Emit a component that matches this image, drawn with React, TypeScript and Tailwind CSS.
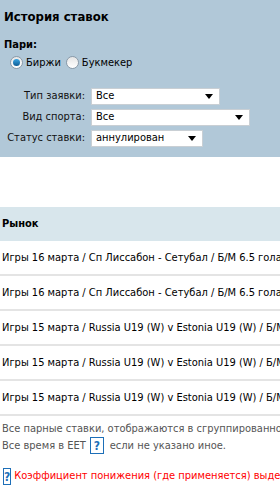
import React from 'react';

const FONT = { fontFamily: '"DejaVu Sans Condensed", "DejaVu Sans", sans-serif' };

const Radio: React.FC<{ checked?: boolean; label: string }> = ({ checked, label }) => (
    <label className="flex items-center gap-[3px]">
        <span className="w-[13px] h-[13px] rounded-full border border-[#8a9aa8] bg-gradient-to-b from-[#e6e6e6] to-[#ffffff] flex items-center justify-center">
            {checked && <span className="w-[7px] h-[7px] rounded-full bg-gradient-to-b from-[#3aa6e4] to-[#0d5c94]" />}
        </span>
        <span>{label}</span>
    </label>
);

const Select: React.FC<{ value: string; width: string }> = ({ value, width }) => (
    <div className={`${width} h-[17px] bg-white border border-[#c9cfd4] flex items-center justify-between pl-[4px] pr-[6px]`}>
        <span className="text-black">{value}</span>
        <svg width="8" height="5" viewBox="0 0 8 5"><path d="M0 0h8L4 5z" fill="#000" /></svg>
    </div>
);

const Help: React.FC = () => (
    <span className="inline-flex w-[14px] h-[17px] border border-[#1d6fb8] items-center justify-center text-[#1d6fb8] text-[12px] font-bold align-middle">?</span>
);

const rows = [
    'Игры 16 марта / Сп Лиссабон - Сетубал / Б/М 6.5 гола',
    'Игры 16 марта / Сп Лиссабон - Сетубал / Б/М 6.5 гола',
    'Игры 15 марта / Russia U19 (W) v Estonia U19 (W) / Б/М',
    'Игры 15 марта / Russia U19 (W) v Estonia U19 (W) / Б/М',
    'Игры 15 марта / Russia U19 (W) v Estonia U19 (W) / Б/М',
];

const App: React.FC = () => (
    <div className="w-[280px] h-[504px] overflow-hidden bg-white text-[11px] text-black whitespace-nowrap" style={FONT}>
        <div className="bg-[#b1c8d8] h-[157px] px-[4px] pt-[8px]">
            <h1 className="text-[13px] font-bold leading-[18px]">История ставок</h1>
            <div className="mt-[12px] font-bold leading-[14px]">Пари:</div>
            <div className="flex gap-[5px] pl-[6px] mt-[3px] leading-[15px]">
                <Radio checked label="Биржи" />
                <Radio label="Букмекер" />
            </div>
            <div className="mt-[18px] flex flex-col gap-[4px]">
                {[
                    ['Тип заявки:', 'Все', 'w-[129px]'],
                    ['Вид спорта:', 'Все', 'w-[159px]'],
                    ['Статус ставки:', 'аннулирован', 'w-[112px]'],
                ].map(([l, v, w]) => (
                    <div key={l} className="flex items-center">
                        <span className="w-[81px] text-right text-[#111]">{l}</span>
                        <span className="ml-[6px]"><Select value={v} width={w} /></span>
                    </div>
                ))}
            </div>
        </div>
        <div className="h-[50px]" />
        <div className="bg-[#d8e6ec] h-[34px] flex items-center px-[2px] font-bold">Рынок</div>
        {rows.map((r, i) => (
            <div key={i} className="h-[35px] flex items-center px-[2px] border-b-[2px] border-[#e4e4e4] pt-[1px]">{r}</div>
        ))}
        <div className="px-[2px] pt-[5px] text-[#555] leading-[16px]">
            <div>Все парные ставки, отображаются в сгруппированном виде</div>
            <div className="flex items-center">Все время в EET <span className="ml-[4px] mr-[6px]"><Help /></span> если не указано иное.</div>
        </div>
        <div className="px-[3px] mt-[14px] flex items-center text-[#f00]">
            <Help />
            <span className="ml-[3px]">Коэффициент понижения (где применяется) выделен</span>
        </div>
    </div>
);

export default App;
